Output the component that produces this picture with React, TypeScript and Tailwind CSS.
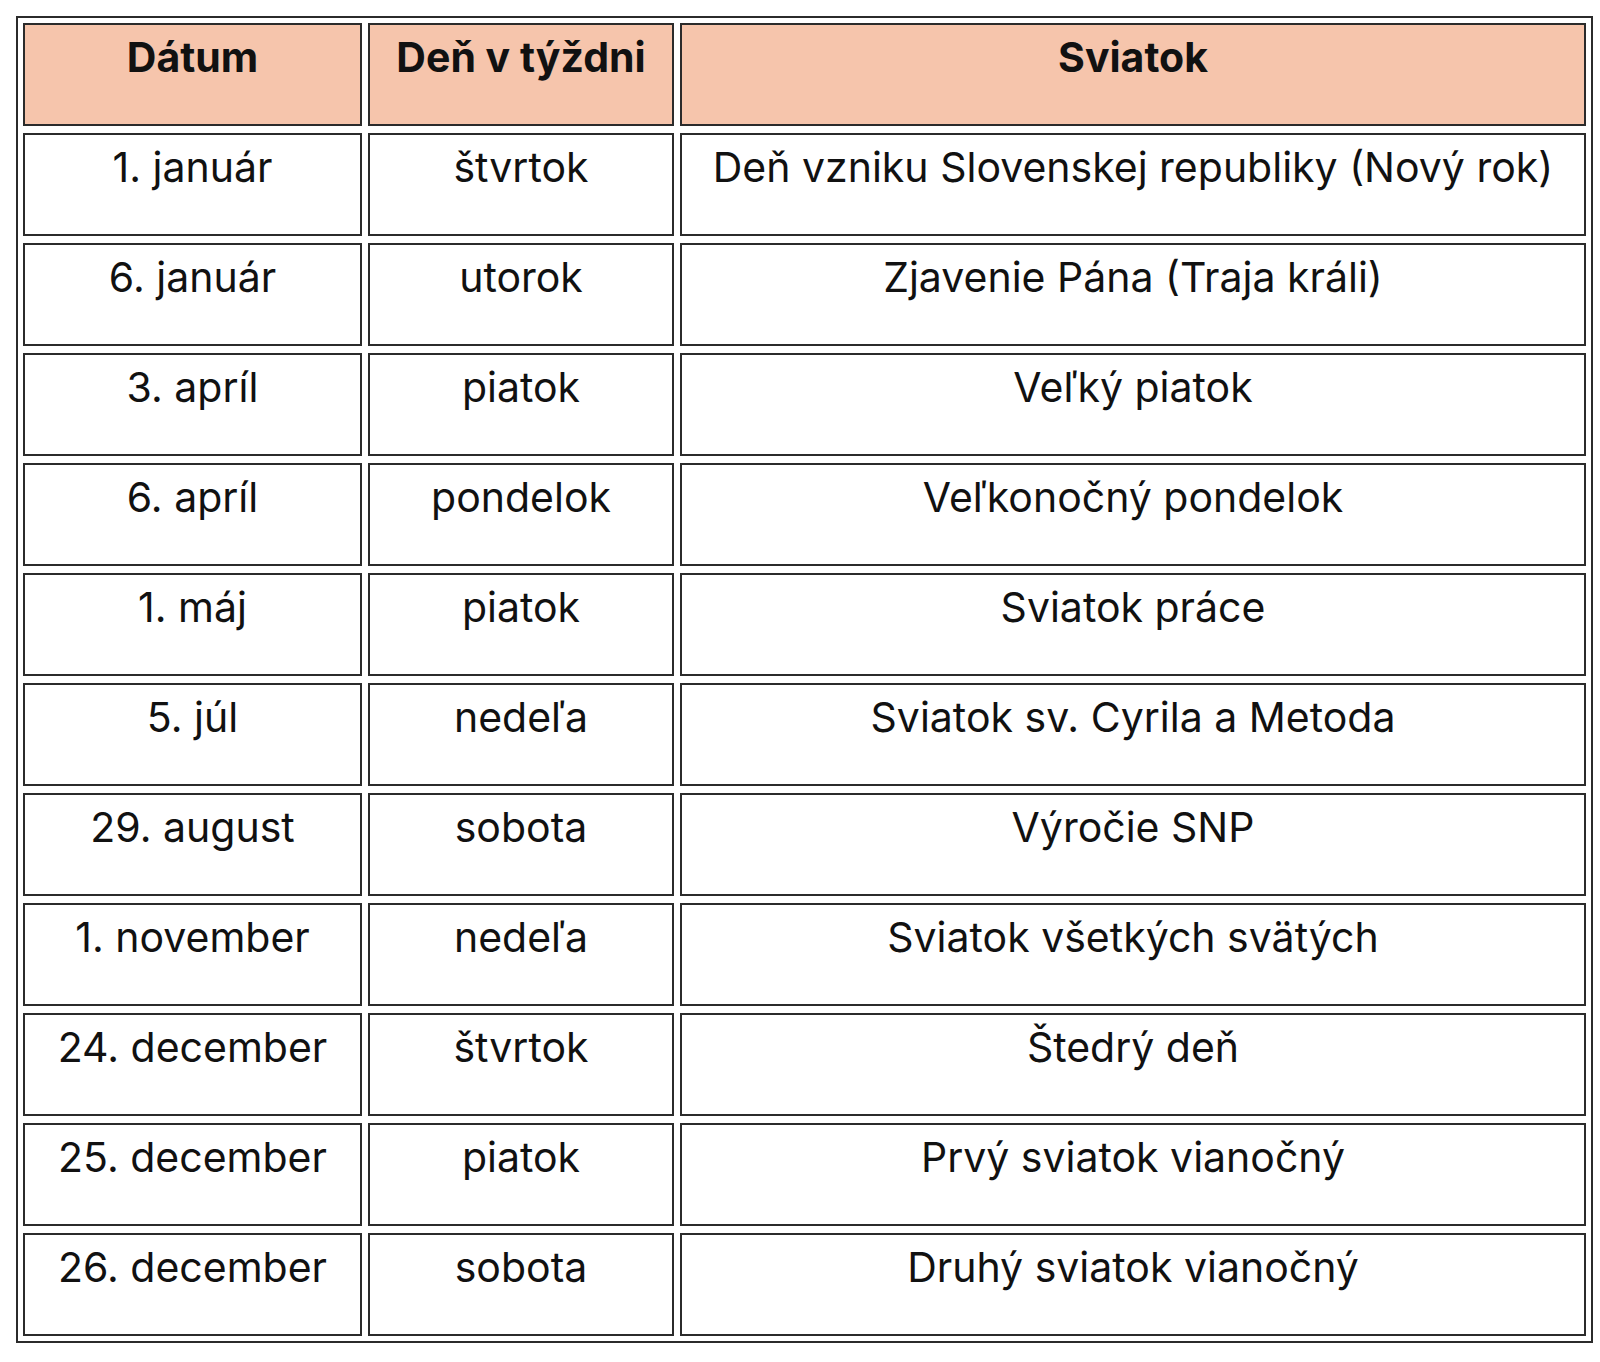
import React from 'react'

const rows: [string, string, string][] = [
  ['1. január', 'štvrtok', 'Deň vzniku Slovenskej republiky (Nový rok)'],
  ['6. január', 'utorok', 'Zjavenie Pána (Traja králi)'],
  ['3. apríl', 'piatok', 'Veľký piatok'],
  ['6. apríl', 'pondelok', 'Veľkonočný pondelok'],
  ['1. máj', 'piatok', 'Sviatok práce'],
  ['5. júl', 'nedeľa', 'Sviatok sv. Cyrila a Metoda'],
  ['29. august', 'sobota', 'Výročie SNP'],
  ['1. november', 'nedeľa', 'Sviatok všetkých svätých'],
  ['24. december', 'štvrtok', 'Štedrý deň'],
  ['25. december', 'piatok', 'Prvý sviatok vianočný'],
  ['26. december', 'sobota', 'Druhý sviatok vianočný'],
]

function Cell({ children, head }: { children: React.ReactNode; head?: boolean }) {
  return (
    <div
      className={`h-[103px] border-2 border-[#2b2b2b] text-center pt-[8px] leading-[48px] ${
        head ? 'bg-[#f6c5ac] font-bold text-[41px]' : 'bg-white text-[41px]'
      }`}
    >
      {children}
    </div>
  )
}

export default function App() {
  return (
    <div className="min-h-screen bg-white pt-[16px] pl-[16px] text-[#111]" style={{ fontFamily: 'Inter, "Noto Sans", sans-serif' }}>
      <div className="w-[1577px] border-2 border-[#2b2b2b] p-[5px]">
        <div className="grid grid-cols-[339px_306px_1fr] gap-x-[6px] gap-y-[7px]">
          <Cell head>Dátum</Cell>
          <Cell head>Deň v týždni</Cell>
          <Cell head>Sviatok</Cell>
          {rows.map((r) => (
            <React.Fragment key={r[0]}>
              <Cell>{r[0]}</Cell>
              <Cell>{r[1]}</Cell>
              <Cell>{r[2]}</Cell>
            </React.Fragment>
          ))}
        </div>
      </div>
    </div>
  )
}
